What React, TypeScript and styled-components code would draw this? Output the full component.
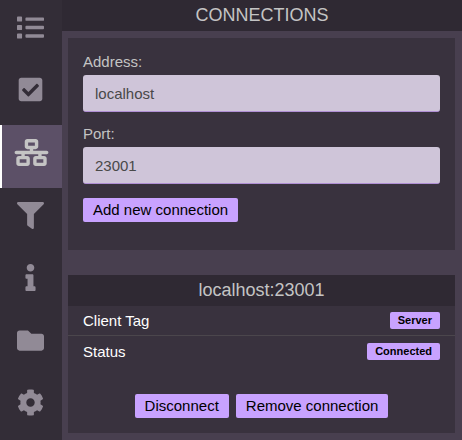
import React from "react";
import styled, { createGlobalStyle } from "styled-components";
import type { IconType } from "react-icons";
import {
  FaCheckSquare,
  FaCog,
  FaFilter,
  FaFolder,
  FaInfo,
  FaList,
} from "react-icons/fa";
import { FaNetworkWired } from "react-icons/fa6";

const GlobalStyle = createGlobalStyle`
  *, *::before, *::after { box-sizing: border-box; }
  body {
    margin: 0;
    background: #483f4f;
    color: #c4c4c4;
    font-family: "Liberation Sans", Arial, sans-serif;
    font-size: 15px;
  }
  button, input { font: inherit; }
`;

const Layout = styled.div`
  display: flex;
  min-height: 100vh;
`;

const Sidebar = styled.nav`
  display: flex;
  flex-direction: column;
  flex: none;
  width: 62px;
  padding-bottom: 2px;
  background: #332d37;
`;

const SidebarButton = styled.button<{ $active: boolean }>`
  display: flex;
  flex: 1;
  align-items: center;
  justify-content: center;
  max-height: 64px;
  padding: 0 1px 8px 0;
  border: 0;
  border-left: ${(p) => (p.$active ? "2px solid #ffffff" : "0")};
  background: ${(p) => (p.$active ? "#5c5067" : "transparent")};
  color: ${(p) => (p.$active ? "#c4c4c4" : "#918a96")};
  cursor: pointer;

  svg {
    flex: none;
    width: 35px;
    height: 27px;
  }
`;

const Main = styled.main`
  flex: 1;
  min-width: 0;
`;

const PageTitle = styled.h1`
  margin: 0;
  background: #2f2933;
  font-size: 18px;
  font-weight: 400;
  line-height: 31px;
  text-align: center;
`;

const Panels = styled.div`
  display: flex;
  flex-direction: column;
  gap: 25px;
  padding: 7px 7px 7px 6px;
`;

const Form = styled.form`
  padding: 15px 15px 28px;
  background: #39323e;
`;

const Field = styled.div`
  display: flex;
  flex-direction: column;
  margin-bottom: 13px;
`;

const Label = styled.label`
  line-height: 18px;
  margin-bottom: 4px;
`;

const TextInput = styled.input`
  width: 100%;
  height: 37px;
  padding: 0 12px;
  border: 0;
  border-bottom: 1px solid #b08fd4;
  border-radius: 3px;
  outline: 0;
  background: #cfc5d9;
  color: #494949;
`;

const FormActions = styled.div`
  display: flex;
  padding-top: 1px;
`;

const Button = styled.button`
  height: 24px;
  padding: 0 10px;
  border: 0;
  border-radius: 2px;
  background: #c8a2ff;
  color: #000000;
  line-height: 24px;
  cursor: pointer;
`;

const Card = styled.section`
  background: #39323e;
`;

const CardTitle = styled.h2`
  margin: 0;
  background: #2f2933;
  font-size: 18px;
  font-weight: 400;
  line-height: 31px;
  text-align: center;
`;

const Details = styled.dl`
  margin: 0;
`;

const DetailRow = styled.div`
  display: flex;
  align-items: center;
  justify-content: space-between;
  height: 31px;
  padding: 0 15px;
  color: #ffffff;

  &:not(:last-child) {
    height: 30px;
    border-bottom: 1px solid #4b464c;
  }
`;

const Badge = styled.dd`
  margin: 0;
  padding: 0 8px;
  border-radius: 2px;
  background: #c8a2ff;
  color: #000000;
  font-size: 11px;
  font-weight: 700;
  line-height: 17px;
`;

const Actions = styled.div`
  display: flex;
  justify-content: center;
  gap: 7px;
  padding: 27px 15px 15px;
`;

const sections: { label: string; icon: IconType }[] = [
  { label: "List", icon: FaList },
  { label: "Tasks", icon: FaCheckSquare },
  { label: "Connections", icon: FaNetworkWired },
  { label: "Filters", icon: FaFilter },
  { label: "Information", icon: FaInfo },
  { label: "Files", icon: FaFolder },
  { label: "Settings", icon: FaCog },
];

const details = [
  { name: "Client Tag", value: "Server" },
  { name: "Status", value: "Connected" },
];

export default function App() {
  return (
    <>
      <GlobalStyle />
      <Layout>
        <Sidebar>
          {sections.map(({ label, icon: Icon }) => (
            <SidebarButton
              key={label}
              type="button"
              aria-label={label}
              $active={label === "Connections"}
            >
              <Icon />
            </SidebarButton>
          ))}
        </Sidebar>
        <Main>
          <PageTitle>CONNECTIONS</PageTitle>
          <Panels>
            <Form onSubmit={(e) => e.preventDefault()}>
              <Field>
                <Label htmlFor="address">Address:</Label>
                <TextInput id="address" type="text" defaultValue="localhost" />
              </Field>
              <Field>
                <Label htmlFor="port">Port:</Label>
                <TextInput id="port" type="text" defaultValue="23001" />
              </Field>
              <FormActions>
                <Button type="submit">Add new connection</Button>
              </FormActions>
            </Form>
            <Card>
              <CardTitle>localhost:23001</CardTitle>
              <Details>
                {details.map(({ name, value }) => (
                  <DetailRow key={name}>
                    <dt>{name}</dt>
                    <Badge>{value}</Badge>
                  </DetailRow>
                ))}
              </Details>
              <Actions>
                <Button type="button">Disconnect</Button>
                <Button type="button">Remove connection</Button>
              </Actions>
            </Card>
          </Panels>
        </Main>
      </Layout>
    </>
  );
}
